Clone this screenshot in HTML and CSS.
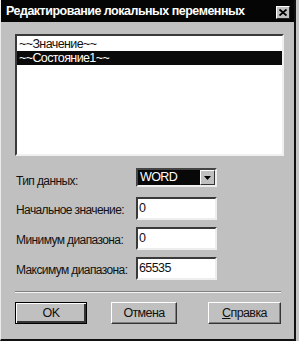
FILE: index.html
```html
<!DOCTYPE html>
<html lang="ru">
  <head>
    <meta charset="UTF-8" />
    <title>Редактирование локальных переменных</title>
    <link rel="stylesheet" href="styles.css">
  </head>
  <body>
    <div class="dialog">
      <div class="titlebar">
        <span class="title">Редактирование локальных переменных</span>
        <button class="close-btn" type="button">
          <svg width="8" height="7" viewBox="0 0 8 7">
            <path d="M0.5 0.5 L7.5 6.5 M7.5 0.5 L0.5 6.5" stroke="#000" stroke-width="1.8" fill="none" />
          </svg>
        </button>
      </div>

      <div class="content">
        <div class="listbox">
          <div class="list-item">~~Значение~~</div>
          <div class="list-item selected">~~Состояние1~~</div>
        </div>

        <div class="fields">
          <label class="field-label">Тип данных:</label>
          <div class="combo">
            <span class="combo-value">WORD</span>
            <span class="combo-arrow">
              <svg width="7" height="4" viewBox="0 0 7 4"><path d="M0 0 H7 L3.5 4 Z" fill="#000" /></svg>
            </span>
          </div>

          <label class="field-label">Начальное значение:</label>
          <div class="textbox">0</div>

          <label class="field-label">Минимум диапазона:</label>
          <div class="textbox">0</div>

          <label class="field-label">Максимум диапазона:</label>
          <div class="textbox">65535</div>
        </div>

        <div class="separator"></div>

        <div class="buttons">
          <button class="btn btn-default btn-ok" type="button">OK</button>
          <button class="btn btn-cancel" type="button">Отмена</button>
          <button class="btn btn-help" type="button"><u>С</u>правка</button>
        </div>
      </div>
    </div>
  </body>
</html>
```

FILE: styles.css
```css
body {
  margin: 0;
  background-color: #c6c6c6;
  font-family: "Liberation Sans", Arial, sans-serif;
}
.dialog {
  width: 296px;
  height: 341px;
  box-sizing: border-box;
  background-color: #c0c0c0;
  border-left: 1px solid #ececec;
  border-right: 2px solid #111;
  border-bottom: 2px solid #111;
}
.titlebar {
  height: 22px;
  background-color: #050505;
  color: #ffffff;
  display: flex;
  align-items: center;
  justify-content: space-between;
  padding: 0 4px 0 5px;
}
.title {
  font-weight: bold;
  font-size: 12.5px;
  letter-spacing: -0.5px;
}
.close-btn {
  width: 14px;
  height: 13px;
  padding: 0;
  margin-top: 3px;
  box-sizing: border-box;
  background-color: #c0c0c0;
  border: 1px solid;
  border-color: #ffffff #222 #222 #ffffff;
  display: flex;
  align-items: center;
  justify-content: center;
}
.content {
  padding: 12px 0 0 14px;
}
.listbox {
  width: 269px;
  height: 122px;
  box-sizing: border-box;
  background-color: #ffffff;
  border: 2px solid;
  border-color: #3a3a3a #f0f0f0 #f0f0f0 #3a3a3a;
  padding-top: 1px;
}
.list-item {
  height: 14px;
  line-height: 14px;
  font-size: 12.5px;
  letter-spacing: -0.6px;
  padding-left: 2px;
  color: #111;
}
.list-item.selected {
  background-color: #0a0a0a;
  color: #ffffff;
}
.fields {
  margin-top: 12px;
  display: grid;
  grid-template-columns: 121px 81px;
  row-gap: 7px;
  align-items: center;
}
.field-label {
  font-size: 12px;
  letter-spacing: -0.6px;
  white-space: nowrap;
  color: #111;
  padding-left: 1px;
  padding-top: 3px;
}
.combo {
  height: 19px;
  margin-bottom: 3px;
  box-sizing: border-box;
  border: 2px solid;
  border-color: #444 #eee #eee #444;
  background-color: #ffffff;
  display: flex;
}
.combo-value {
  flex: 1;
  background-color: #080808;
  color: #ffffff;
  font-size: 12.5px;
  letter-spacing: -0.6px;
  line-height: 15px;
  padding-left: 2px;
}
.combo-arrow {
  width: 15px;
  box-sizing: border-box;
  background-color: #c0c0c0;
  border: 1px solid;
  border-color: #fff #333 #333 #fff;
  display: flex;
  align-items: center;
  justify-content: center;
}
.textbox {
  height: 23px;
  box-sizing: border-box;
  border: 2px solid;
  border-color: #3a3a3a #eee #eee #3a3a3a;
  background-color: #ffffff;
  font-size: 12.5px;
  letter-spacing: -0.6px;
  line-height: 18px;
  padding-left: 1px;
  color: #111;
}
.separator {
  width: 266px;
  margin-top: 11px;
  height: 1px;
  background-color: #808080;
  border-bottom: 1px solid #f4f4f4;
}
.buttons {
  margin-top: 9px;
  display: flex;
}
.btn {
  height: 22px;
  box-sizing: border-box;
  background-color: #c0c0c0;
  border: 1px solid;
  border-color: #fff #333 #333 #fff;
  box-shadow: inset -1px -1px 0 #808080;
  font-family: "Liberation Sans", Arial, sans-serif;
  font-size: 12.5px;
  letter-spacing: -0.6px;
  color: #111;
  padding: 0;
}
.btn-default {
  border: 1px solid #000;
  box-shadow: inset 1px 1px 0 #fff, inset -2px -2px 0 #333;
}
.btn-ok {
  width: 72px;
}
.btn-cancel {
  width: 66px;
  margin-left: 24px;
}
.btn-help {
  width: 73px;
  margin-left: 31px;
}
.btn u {
  text-decoration: underline;
}
```
